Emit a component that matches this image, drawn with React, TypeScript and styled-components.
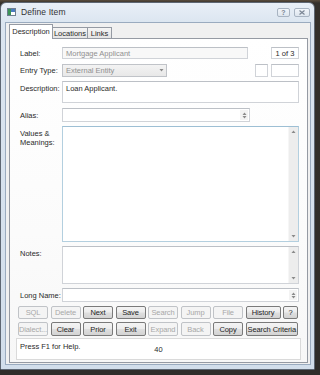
import React from "react";
import styled, { createGlobalStyle } from "styled-components";

const GlobalStyle = createGlobalStyle`
  html, body { margin: 0; padding: 0; }
  body {
    width: 320px;
    height: 375px;
    overflow: hidden;
    background: #2e2c29;
    font-family: "Liberation Sans", Arial, sans-serif;
  }
  * { box-sizing: border-box; }
`;

const Desktop = styled.div`
  width: 320px;
  height: 375px;
  padding: 2px 5px 5px 0;
  background: linear-gradient(180deg, #5a4c3c 0px, #34302b 3px, #2f2d2a 100%);
  display: flex;
`;

const Window = styled.div`
  flex: 1;
  display: flex;
  flex-direction: column;
  border: 1px solid #5e6773;
  border-radius: 6px 6px 1px 1px;
  background: linear-gradient(180deg, #e9eff7 0px, #dbe5f0 20px, #d2deeb 100%);
  padding: 0 3px 4px 4px;
`;

const TitleBar = styled.div`
  height: 19px;
  display: flex;
  align-items: center;
  padding: 0 0 1px 2px;
  gap: 5px;
`;

const TitleText = styled.span`
  font-size: 8.5px;
  color: #333333;
  flex: 1;
  letter-spacing: 0.1px;
`;

const CaptionGroup = styled.div`
  display: flex;
  gap: 4px;
  margin-right: 1px;
  align-self: flex-start;
  margin-top: 5px;
`;

const CaptionBtn = styled.div<{ $w: number }>`
  width: ${(p) => p.$w}px;
  height: 9px;
  border: 1px solid #a8b4c2;
  border-radius: 2px;
  background: linear-gradient(180deg, #f1f5fa, #dde5ee);
  display: flex;
  align-items: center;
  justify-content: center;
  font-size: 7px;
  font-weight: bold;
  color: #7a8594;
  line-height: 1;
`;

const Client = styled.div`
  flex: 1;
  display: flex;
  flex-direction: column;
  background: #f0f0f0;
  border: 1px solid #9aabbf;
  padding: 1px 2px 1px 3px;
`;

const TabStrip = styled.div`
  height: 15px;
  display: flex;
  align-items: flex-end;
  position: relative;
  z-index: 1;
  margin-bottom: -1px;
`;

const Tab = styled.div<{ $w: number; $active?: boolean }>`
  width: ${(p) => p.$w}px;
  height: ${(p) => (p.$active ? 15 : 12)}px;
  border: 1px solid #959aa3;
  border-bottom: ${(p) => (p.$active ? "none" : "1px solid #959aa3")};
  margin-left: ${(p) => (p.$active ? 0 : -1)}px;
  background: ${(p) =>
    p.$active ? "#ffffff" : "linear-gradient(180deg, #f5f5f5, #e4e4e4)"};
  font-size: 7.5px;
  color: #2a2a2a;
  display: flex;
  align-items: center;
  justify-content: center;
  padding-bottom: ${(p) => (p.$active ? 2 : 0)}px;
`;

const TabPage = styled.div`
  flex: 1;
  border: 1px solid #959aa3;
  background: linear-gradient(180deg, #ffffff, #fbfbfb 60%, #f7f7f7);
  padding: 8px 8px 0 10px;
  display: flex;
  flex-direction: column;
`;

const Row = styled.div<{ $h: number; $mt?: number }>`
  height: ${(p) => p.$h}px;
  margin-top: ${(p) => p.$mt ?? 0}px;
  display: grid;
  grid-template-columns: 42px 1fr;
`;

const Label = styled.div<{ $pt?: number }>`
  font-size: 7.5px;
  color: #2a2a2a;
  line-height: 9px;
  padding-top: ${(p) => p.$pt ?? 0}px;
  align-self: ${(p) => (p.$pt === undefined ? "center" : "start")};
  white-space: nowrap;
`;

const FieldLine = styled.div`
  display: flex;
  align-items: stretch;
  justify-content: space-between;
`;

const Box = styled.div<{ $w?: number; $disabled?: boolean; $focus?: boolean }>`
  width: ${(p) => (p.$w ? `${p.$w}px` : "100%")};
  border: 1px solid ${(p) => (p.$focus ? "#b3cfdf" : "#d0d3d8")};
  border-top-color: ${(p) => (p.$focus ? "#9dbfd4" : "#bcc0c6")};
  background: ${(p) => (p.$disabled ? "#f8f8f8" : "#ffffff")};
  color: ${(p) => (p.$disabled ? "#909090" : "#2a2a2a")};
  font-size: 7.5px;
  line-height: 9px;
  display: flex;
  align-items: stretch;
`;

const BoxText = styled.div<{ $center?: boolean }>`
  flex: 1;
  padding: ${(p) => (p.$center ? "0 2px" : "2px 3px")};
  display: flex;
  align-items: ${(p) => (p.$center ? "center" : "flex-start")};
  justify-content: ${(p) => (p.$center ? "center" : "flex-start")};
  white-space: nowrap;
  overflow: hidden;
`;

const InlineText = styled(BoxText)`
  align-items: center;
  padding: 0 3px;
`;

const Select = styled.div`
  width: 105px;
  border: 1px solid #c0c3c8;
  background: linear-gradient(180deg, #f3f3f3, #e8e8e8);
  color: #909090;
  font-size: 7.5px;
  display: flex;
  align-items: center;
  justify-content: space-between;
  padding: 0 2px 0 3px;
`;

const RightGroup = styled.div`
  display: flex;
  gap: 3px;
`;

const Scroll = styled.div`
  width: 10px;
  background: #ededed;
  border-left: 1px solid #f6f6f6;
  display: flex;
  flex-direction: column;
  justify-content: space-between;
  align-items: center;
  padding: 3px 0;
`;

const Spin = styled.div`
  width: 8px;
  display: flex;
  flex-direction: column;
  justify-content: center;
  align-items: center;
  gap: 1px;
  background: #f3f3f3;
  margin: 1px;
`;

const ButtonGrid = styled.div`
  margin-top: 4px;
  display: grid;
  grid-template-columns: repeat(7, 30px) 35px 15px;
  grid-template-rows: 13px 14px;
  column-gap: 2.5px;
  row-gap: 3px;
  margin-left: -2px;
`;

const Btn = styled.button<{ $on?: boolean; $span?: number }>`
  grid-column: span ${(p) => p.$span ?? 1};
  margin: 0;
  padding: 0;
  font-family: inherit;
  font-size: 7.5px;
  border: 1px solid ${(p) => (p.$on ? "#7a7a7a" : "#c0c3c7")};
  border-radius: 2px;
  background: ${(p) =>
    p.$on
      ? "linear-gradient(180deg, #f4f4f4 0%, #ececec 48%, #dfdfdf 52%, #d3d3d3 100%)"
      : "#f4f4f4"};
  color: ${(p) => (p.$on ? "#1e1e1e" : "#a8a8a8")};
  display: flex;
  align-items: center;
  justify-content: center;
  white-space: nowrap;
  letter-spacing: -0.1px;
`;

const Status = styled.div`
  margin: 2px -2px 0 -4px;
  height: 22px;
  border: 1px solid #dadada;
  background: #ffffff;
  display: grid;
  grid-template-columns: 1fr auto 1fr;
  font-size: 7.5px;
  color: #2a2a2a;
  padding: 3px 3px 0 3px;
`;

const Counter = styled.span`
  padding-top: 3px;
`;

const Up = () => (
  <svg width="5" height="3" viewBox="0 0 5 3">
    <path d="M0.5 3 L2.5 0.5 L4.5 3 Z" fill="#8a8a8a" />
  </svg>
);
const Down = () => (
  <svg width="5" height="3" viewBox="0 0 5 3">
    <path d="M0.5 0 L2.5 2.5 L4.5 0 Z" fill="#8a8a8a" />
  </svg>
);

const AppIcon = () => (
  <svg width="9" height="8" viewBox="0 0 9 8">
    <rect x="0.5" y="0.5" width="8" height="7" fill="#ffffff" stroke="#6f7f90" />
    <rect x="1" y="1" width="3" height="6" fill="#3c9457" />
    <rect x="4" y="1" width="4" height="3" fill="#4a7cc0" />
  </svg>
);

export default function App() {
  return (
    <>
      <GlobalStyle />
      <Desktop>
        <Window>
          <TitleBar>
            <AppIcon />
            <TitleText>Define Item</TitleText>
            <CaptionGroup>
              <CaptionBtn $w={13}>?</CaptionBtn>
              <CaptionBtn $w={16}>
                <svg width="6" height="5" viewBox="0 0 6 5">
                  <path d="M0.5 0.5 L5.5 4.5 M5.5 0.5 L0.5 4.5" stroke="#7a8594" strokeWidth="1.2" />
                </svg>
              </CaptionBtn>
            </CaptionGroup>
          </TitleBar>
          <Client>
            <TabStrip>
              <Tab $w={44} $active>
                Description
              </Tab>
              <Tab $w={36}>Locations</Tab>
              <Tab $w={25}>Links</Tab>
            </TabStrip>
            <TabPage>
              <Row $h={12}>
                <Label>Label:</Label>
                <FieldLine>
                  <Box $w={186} $disabled>
                    <InlineText>Mortgage Applicant</InlineText>
                  </Box>
                  <Box $w={28}>
                    <BoxText $center>1 of 3</BoxText>
                  </Box>
                </FieldLine>
              </Row>
              <Row $h={13} $mt={5}>
                <Label>Entry Type:</Label>
                <FieldLine>
                  <Select>
                    <span>External Entity</span>
                    <Down />
                  </Select>
                  <RightGroup>
                    <Box $w={13} />
                    <Box $w={28} />
                  </RightGroup>
                </FieldLine>
              </Row>
              <Row $h={22} $mt={4}>
                <Label $pt={3}>Description:</Label>
                <Box>
                  <BoxText>Loan Applicant.</BoxText>
                </Box>
              </Row>
              <Row $h={14} $mt={5}>
                <Label>Alias:</Label>
                <FieldLine>
                  <Box $w={188}>
                    <BoxText />
                    <Spin>
                      <Up />
                      <Down />
                    </Spin>
                  </Box>
                </FieldLine>
              </Row>
              <Row $h={116} $mt={4}>
                <Label $pt={3}>
                  Values &amp;
                  <br />
                  Meanings:
                </Label>
                <Box $focus>
                  <BoxText />
                  <Scroll>
                    <Up />
                    <Down />
                  </Scroll>
                </Box>
              </Row>
              <Row $h={38} $mt={4}>
                <Label $pt={3}>Notes:</Label>
                <Box>
                  <BoxText />
                  <Scroll>
                    <Up />
                    <Down />
                  </Scroll>
                </Box>
              </Row>
              <Row $h={14} $mt={4}>
                <Label>Long Name:</Label>
                <Box>
                  <BoxText />
                  <Spin>
                    <Up />
                    <Down />
                  </Spin>
                </Box>
              </Row>
              <ButtonGrid>
                <Btn>SQL</Btn>
                <Btn>Delete</Btn>
                <Btn $on>Next</Btn>
                <Btn $on>Save</Btn>
                <Btn>Search</Btn>
                <Btn>Jump</Btn>
                <Btn>File</Btn>
                <Btn $on>History</Btn>
                <Btn $on>?</Btn>
                <Btn>Dialect...</Btn>
                <Btn $on>Clear</Btn>
                <Btn $on>Prior</Btn>
                <Btn $on>Exit</Btn>
                <Btn>Expand</Btn>
                <Btn>Back</Btn>
                <Btn $on>Copy</Btn>
                <Btn $on $span={2}>
                  Search Criteria
                </Btn>
              </ButtonGrid>
              <Status>
                <span>Press F1 for Help.</span>
                <Counter>40</Counter>
                <span />
              </Status>
            </TabPage>
          </Client>
        </Window>
      </Desktop>
    </>
  );
}
